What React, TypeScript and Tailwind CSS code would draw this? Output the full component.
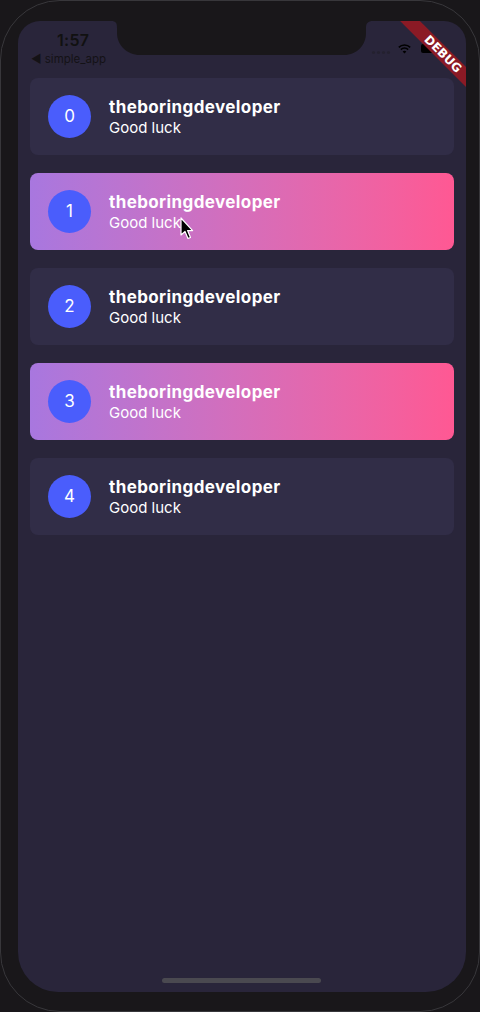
import React from "react";

const rows = [0, 1, 2, 3, 4];

function Notch() {
  return (
    <svg
      className="absolute left-[93px] top-0"
      width="262"
      height="34"
      viewBox="0 0 262 34"
    >
      <path
        d="M0 0 H262 C257 0 255 2 255 7 V12 C255 24 246 34 233 34 H29 C16 34 6 24 6 12 V7 C6 2 5 0 0 0 Z"
        fill="#19171a"
      />
    </svg>
  );
}

function Cursor() {
  return (
    <svg
      className="absolute left-[162px] top-[196px]"
      width="16"
      height="24"
      viewBox="0 0 16 24"
    >
      <path
        d="M1 1 L1 18 L5 14.5 L8 21.5 L10.5 20.5 L7.6 13.6 L12.6 13.6 Z"
        fill="#000"
        stroke="#fff"
        strokeWidth="1.2"
        strokeLinejoin="round"
      />
    </svg>
  );
}

function StatusBar() {
  return (
    <>
      <div className="absolute left-[13px] top-[8px] flex flex-col items-start">
        <span className="ml-[26px] text-[16px] leading-[22px] font-semibold tracking-[0.3px] text-[#111] [font-family:Inter,'Noto_Sans',sans-serif]">
          1:57
        </span>
        <span className="mt-[1px] text-[11.5px] leading-[14px] text-[#141216] [font-family:Inter,'Noto_Sans',sans-serif]">
          ◀ simple_app
        </span>
      </div>
      <div className="absolute left-[354px] top-[22px] flex items-center">
        <div className="flex gap-[2px] mt-[8px]">
          {[0, 1, 2, 3].map((i) => (
            <span key={i} className="w-[3px] h-[3px] rounded-full bg-[#24212f]" />
          ))}
        </div>
        <svg className="ml-[8px]" width="13" height="10" viewBox="0 0 13 10">
          <path d="M0.8 3.4 A8 8 0 0 1 12.2 3.4" stroke="#000" strokeWidth="1.6" fill="none" />
          <path d="M2.9 5.6 A5 5 0 0 1 10.1 5.6" stroke="#000" strokeWidth="1.6" fill="none" />
          <path d="M6.5 9.5 L4.6 7.6 A2.7 2.7 0 0 1 8.4 7.6 Z" fill="#000" />
        </svg>
        <div className="ml-[10px] w-[21px] h-[9px] rounded-[2px] bg-black" />
      </div>
    </>
  );
}

function Card({ i }: { i: number }) {
  const highlighted = i % 2 === 1;
  return (
    <div
      className={
        "h-[77px] rounded-[8px] flex items-center pl-[18px] gap-[18px] " +
        (highlighted
          ? "bg-gradient-to-r from-[#a877df] to-[#ff5893]"
          : "bg-[#312d47]")
      }
    >
      <div className="w-[43px] h-[43px] rounded-full bg-[#4a5dfc] flex items-center justify-center text-white text-[17px] [font-family:Inter,sans-serif]">
        {i}
      </div>
      <div className="flex flex-col [font-family:Inter,sans-serif] text-white">
        <span className="text-[17px] leading-[22px] font-bold tracking-[0.4px]">theboringdeveloper</span>
        <span className="text-[15px] leading-[20px]">Good luck</span>
      </div>
    </div>
  );
}

export default function App() {
  return (
    <div className="relative w-[480px] h-[1012px] bg-[#19171a] overflow-hidden">
      <div className="absolute inset-0 rounded-[60px] border border-[#38373b]" />
      <div className="relative pt-[21px] pl-[18px]">
        <div className="relative w-[448px] h-[971px] bg-[#29253a] rounded-t-[22px] rounded-b-[40px] overflow-hidden">
          <Notch />
          <StatusBar />
          <div className="absolute left-[365px] top-[26px] w-[120px] h-[14px] rotate-45 bg-[#8b1a25] flex items-center justify-center">
            <span className="text-white text-[12px] font-bold leading-none [font-family:'DejaVu_Sans',sans-serif]">
              DEBUG
            </span>
          </div>
          <div className="pt-[57px] px-[12px] flex flex-col gap-[18px]">
            {rows.map((i) => (
              <Card key={i} i={i} />
            ))}
          </div>
          <Cursor />
          <div className="absolute left-[144px] bottom-[9px] w-[159px] h-[5px] rounded-full bg-[#4a4950]" />
        </div>
      </div>
    </div>
  );
}
